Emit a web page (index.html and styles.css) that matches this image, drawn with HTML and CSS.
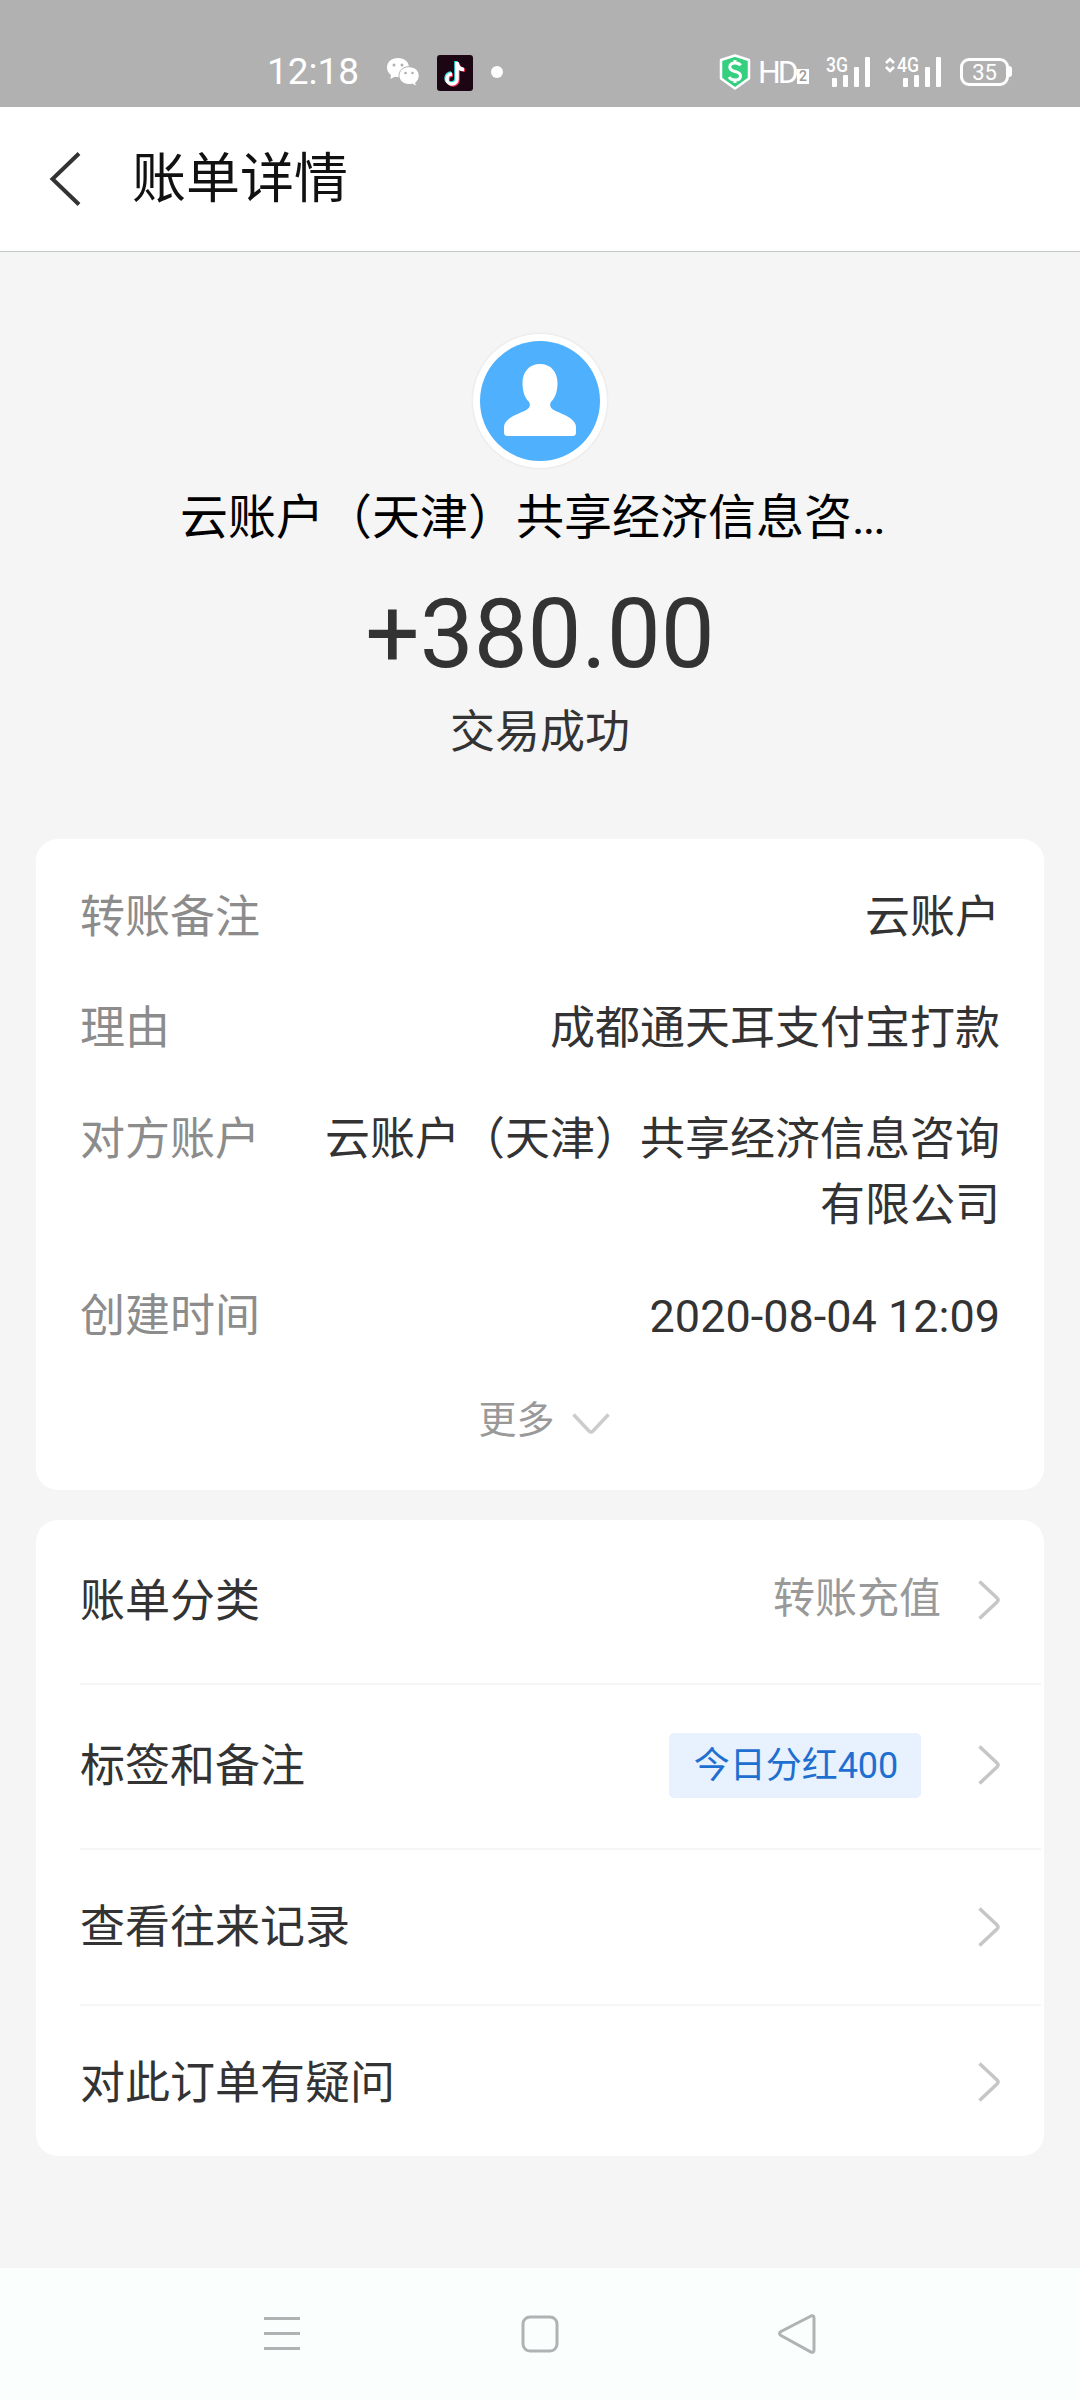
FILE: index.html
```html
<!DOCTYPE html>
<html lang="zh-CN">
<head>
<meta charset="utf-8">
<title>账单详情</title>
<link rel="stylesheet" href="styles.css">
</head>
<body>
<div class="screen">
  <div class="status">
    <div class="status-left">
      <span class="clock">12:18</span>
      <svg class="wechat" width="34" height="30" viewBox="0 0 34 30">
        <path fill="#fff" d="M12 1C5.500 1 1 5 1 10.500c0 3 1.500 5.500 4 7.500l-.6 4 4.400-2.200c1.200.3 2.400.4 3.700.4C18.500 20.200 23 16 23 10.600 23 5 18.500 1 12 1z"/>
        <path fill="#fff" stroke="#b1b1b1" stroke-width="1" d="M23 9.700c-5.800 0-10 3.900-10 8.900s4.200 8.900 10 8.900c1.100 0 2.200-.1 3.200-.4l4.200 2.200-.7-3.600c2.200-1.700 3.500-4.200 3.500-7.100 0-5-4.300-8.900-10.200-8.900z"/>
        <g fill="#b1b1b1"><circle cx="8" cy="8" r="1.500"/><circle cx="16" cy="8" r="1.500"/><circle cx="19.500" cy="16" r="1.300"/><circle cx="26.500" cy="16" r="1.300"/></g>
      </svg>
      <svg class="tiktok" width="36" height="36" viewBox="0 0 36 36">
        <rect width="36" height="36" rx="3" fill="#1d0613"/>
        <g fill="none" stroke-width="3.600">
          <path stroke="#35dfe0" d="M19 6v17a5 5 0 1 1-5-5M19 8c1 4 3 6 7 6"/>
          <path stroke="#ef2a5c" d="M21 8v17a5 5 0 1 1-5-5M21 9c1 4 3 6 7 6"/>
          <path stroke="#fff" d="M20 7v17a5 5 0 1 1-5-5M20 8.500c1 4 3 6 7 6"/>
        </g>
      </svg>
      <span class="dot"></span>
    </div>
    <div class="status-right">
      <svg width="32" height="36" viewBox="0 0 32 36">
        <path d="M16 1.500 30 6v18.500L16 34.500 2 24.500V6z" fill="#35cf80" stroke="#fff" stroke-width="2.500" stroke-linejoin="round"/>
        <path d="M21.500 11.500c-1-2-3-2.500-5.500-2.500-3 0-5.200 1.500-5.200 4s2 3.700 5.200 4.500 5.500 2 5.500 4.500-2.300 4-5.500 4c-3 0-5-1-5.700-3M16 6v4M16 26v3" fill="none" stroke="#fff" stroke-width="3"/>
      </svg>
      <span class="hd">HD</span><span class="sim">2</span>
      <svg class="sig1" width="45" height="38" viewBox="0 -6 45 38">
        <text class="net" x="0" y="17" textLength="22" lengthAdjust="spacingAndGlyphs">3G</text>
        <g fill="#fff"><rect x="6" y="23" width="5" height="9" rx="1"/><rect x="17" y="20" width="5" height="12" rx="1"/><rect x="28" y="12" width="5" height="20" rx="1"/><rect x="39" y="2" width="5" height="30" rx="1"/></g>
      </svg>
      <svg class="sig2" width="57" height="38" viewBox="0 -6 57 38">
        <path d="M1 8l4-4 4 4M1 12l4 4 4-4" fill="none" stroke="#fff" stroke-width="2.600"/>
        <text class="net" x="12" y="17" textLength="22" lengthAdjust="spacingAndGlyphs">4G</text>
        <g fill="#fff"><rect x="18" y="23" width="5" height="9" rx="1"/><rect x="29" y="20" width="5" height="12" rx="1"/><rect x="40" y="12" width="5" height="20" rx="1"/><rect x="51" y="2" width="5" height="30" rx="1"/></g>
      </svg>
      <span class="battery">35</span><span class="battery-tip"></span>
    </div>
  </div>

  <div class="header">
    <svg width="32" height="54" viewBox="0 0 32 54"><path d="M30 1.500 3.500 27 30 52.500" fill="none" stroke="#333" stroke-width="4"/></svg>
    <h1 class="title">账单详情</h1>
  </div>

  <div class="summary">
    <div class="avatar">
      <svg width="120" height="120" viewBox="0 0 120 120">
        <circle cx="60" cy="60" r="60" fill="#4fb0fd"/>
        <path fill="#fff" d="M60 23c-11 0-17.500 8-17.500 19 0 8 2 14.500 6.200 18.500 2 2.500 1.500 6-1.700 8-4 2.500-12 5-17 8.500-4 3-6 6-6 9v5.500q0 3.500 3.500 3.500h65q3.500 0 3.500-3.500V86c0-3-2-6-6-9-5-3.500-13-6-17-8.500-3.200-2-3.700-5.500-1.700-8 4.200-4 6.200-10.500 6.200-18.500 0-11-6.500-19-17.500-19z"/>
      </svg>
    </div>
    <div class="payer">云账户（天津）共享经济信息咨<span class="ellipsis">...</span></div>
    <div class="amount">+380.00</div>
    <div class="state">交易成功</div>
  </div>

  <div class="card details">
    <div class="detail"><span class="label">转账备注</span><span class="value">云账户</span></div>
    <div class="detail"><span class="label">理由</span><span class="value">成都通天耳支付宝打款</span></div>
    <div class="detail"><span class="label">对方账户</span><span class="value">云账户（天津）共享经济信息咨询有限公司</span></div>
    <div class="detail"><span class="label">创建时间</span><span class="value">2020-08-04 12:09</span></div>
    <div class="more">更多<svg width="38" height="22" viewBox="0 0 38 22"><path d="M1.500 1.500 17 18q2 2 4 0L36.500 1.500" fill="none" stroke="#ccc" stroke-width="3.500"/></svg></div>
  </div>

  <div class="card actions">
    <div class="action"><span class="name">账单分类</span><span class="category">转账充值</span><svg class="arrow" viewBox="0 0 22 40"><path d="M1.500 1.500 19 18q2 2 0 4L1.500 38.500"/></svg></div>
    <div class="action"><span class="name">标签和备注</span><span class="tag">今日分红400</span><svg class="arrow" viewBox="0 0 22 40"><path d="M1.500 1.500 19 18q2 2 0 4L1.500 38.500"/></svg></div>
    <div class="action short"><span class="name">查看往来记录</span><svg class="arrow" viewBox="0 0 22 40"><path d="M1.500 1.500 19 18q2 2 0 4L1.500 38.500"/></svg></div>
    <div class="action last"><span class="name">对此订单有疑问</span><svg class="arrow" viewBox="0 0 22 40"><path d="M1.500 1.500 19 18q2 2 0 4L1.500 38.500"/></svg></div>
  </div>

  <div class="navbar">
    <svg width="40" height="42" viewBox="0 0 40 42"><path d="M2 5.500h36M2 20.500h36M2 35.500h36"/></svg>
    <svg width="40" height="42" viewBox="0 0 40 42"><rect x="3" y="4" width="34" height="34" rx="7"/></svg>
    <svg width="40" height="42" viewBox="0 0 40 42"><path d="M34 3 4 18.500q-3 2 0 4L34 39q3 1 3-2V5q0-3-3-2z"/></svg>
  </div>
</div>
</body>
</html>
```

FILE: styles.css
```css
* { box-sizing: border-box; }

body {
  margin: 0;
  font-family: Roboto, "Noto Sans CJK SC", sans-serif;
  color: #333;
  background: #f5f5f5;
}

svg { display: block; flex: none; }

.screen {
  width: 1080px;
  height: 2400px;
  display: flex;
  flex-direction: column;
  overflow: hidden;
}

.status {
  height: 107px;
  flex: none;
  display: flex;
  justify-content: space-between;
  padding: 37px 68px 0 267px;
  background: #b1b1b1;
  color: #fff;
}

.status-left,
.status-right {
  height: 70px;
  display: flex;
  align-items: flex-start;
}

.clock {
  width: 92px;
  font-size: 37px;
  line-height: 70px;
  white-space: nowrap;
}

.wechat { margin: 20px 0 0 27px; }
.tiktok { margin: 18px 0 0 17px; }

.dot {
  width: 12px;
  height: 12px;
  margin: 29px 0 0 18px;
  border-radius: 50%;
  background: #fff;
}

.status-right { padding-top: 17px; }

.hd {
  width: 39px;
  margin: 0 0 0 7px;
  font-size: 32px;
  line-height: 36px;
  letter-spacing: -3px;
}

.sim {
  width: 12px;
  height: 15px;
  margin-top: 15px;
  background: #fff;
  color: #999;
  font-size: 14px;
  line-height: 15px;
  font-weight: 500;
  text-align: center;
}

.sig1 { margin: -5px 0 0 17px; }
.sig2 { margin: -5px 0 0 14px; }

.net {
  font-size: 20px;
  font-weight: 500;
  fill: #fff;
}

.battery {
  width: 49px;
  height: 28px;
  margin: 4px 0 0 18px;
  border: 3px solid #fff;
  border-radius: 9px;
  font-size: 22px;
  line-height: 23px;
  text-align: center;
}

.battery-tip {
  width: 3px;
  height: 11px;
  margin-top: 12px;
  border-radius: 0 3px 3px 0;
  background: #fff;
}

.header {
  height: 145px;
  flex: none;
  display: flex;
  align-items: center;
  padding-left: 49px;
  border-bottom: 1px solid #c3c9c7;
  background: #fff;
}

.title {
  margin: 2px 0 0 51px;
  font-size: 54px;
  line-height: 80px;
  font-weight: 400;
  color: #111;
}

.summary {
  height: 587px;
  flex: none;
  display: flex;
  flex-direction: column;
  align-items: center;
  padding-top: 82px;
}

.avatar {
  padding: 7px;
  border-radius: 50%;
  background: #fff;
  box-shadow: 0 0 3px rgba(0, 0, 0, .1);
}

.payer {
  margin: 14px 16px 0 0;
  font-size: 48px;
  line-height: 72px;
  color: #000;
}

.ellipsis { letter-spacing: -2px; }

.amount {
  margin-top: 24px;
  font-size: 96px;
  line-height: 112px;
}

.state {
  margin-top: 10px;
  font-size: 45px;
  line-height: 66px;
}

.card {
  flex: none;
  margin: 0 36px;
  border-radius: 22px;
  background: #fff;
}

.details {
  height: 651px;
  display: flex;
  flex-direction: column;
  gap: 45px;
  padding: 46px 44px 0;
}

.detail {
  display: flex;
  justify-content: space-between;
  font-size: 45px;
  line-height: 66px;
}

.label { color: #8c8c8c; }

.value {
  width: 690px;
  text-align: right;
}

.more {
  display: flex;
  justify-content: center;
  align-items: center;
  gap: 17px;
  padding-left: 8px;
  margin-top: -5px;
  font-size: 38px;
  line-height: 60px;
  color: #999;
}

.more svg { margin-top: 8px; }

.actions {
  height: 636px;
  margin-top: 30px;
}

.action {
  height: 165px;
  display: flex;
  align-items: center;
  margin: 0 3px 0 44px;
  padding: 0 41px 3px 0;
  border-bottom: 2px solid #f6f6f6;
  font-size: 45px;
  line-height: 66px;
}

.name { padding-top: 3px; }

.short { height: 156px; padding-bottom: 1px; }
.last { height: 150px; padding: 2px 41px 0 0; border-bottom: 0; }

.category {
  margin-left: auto;
  padding-bottom: 2px;
  font-size: 42px;
  color: #999;
}

.tag {
  width: 252px;
  height: 65px;
  margin: 0 20px 0 auto;
  padding-left: 2px;
  border-radius: 5px;
  background: #e8f1fe;
  color: #1e6fd0;
  font-size: 36px;
  line-height: 66px;
  text-align: center;
}

.arrow {
  width: 22px;
  height: 40px;
  margin-left: 37px;
  fill: none;
  stroke: #c6c6c6;
  stroke-width: 3.500;
}

.short .arrow,
.last .arrow { margin-left: auto; }

.navbar {
  height: 132px;
  display: flex;
  justify-content: space-between;
  margin-top: auto;
  padding: 45px 263px 0 262px;
  background: #fafffe;
}

.navbar svg {
  fill: none;
  stroke: #b0b3b3;
  stroke-width: 3;
}
```
